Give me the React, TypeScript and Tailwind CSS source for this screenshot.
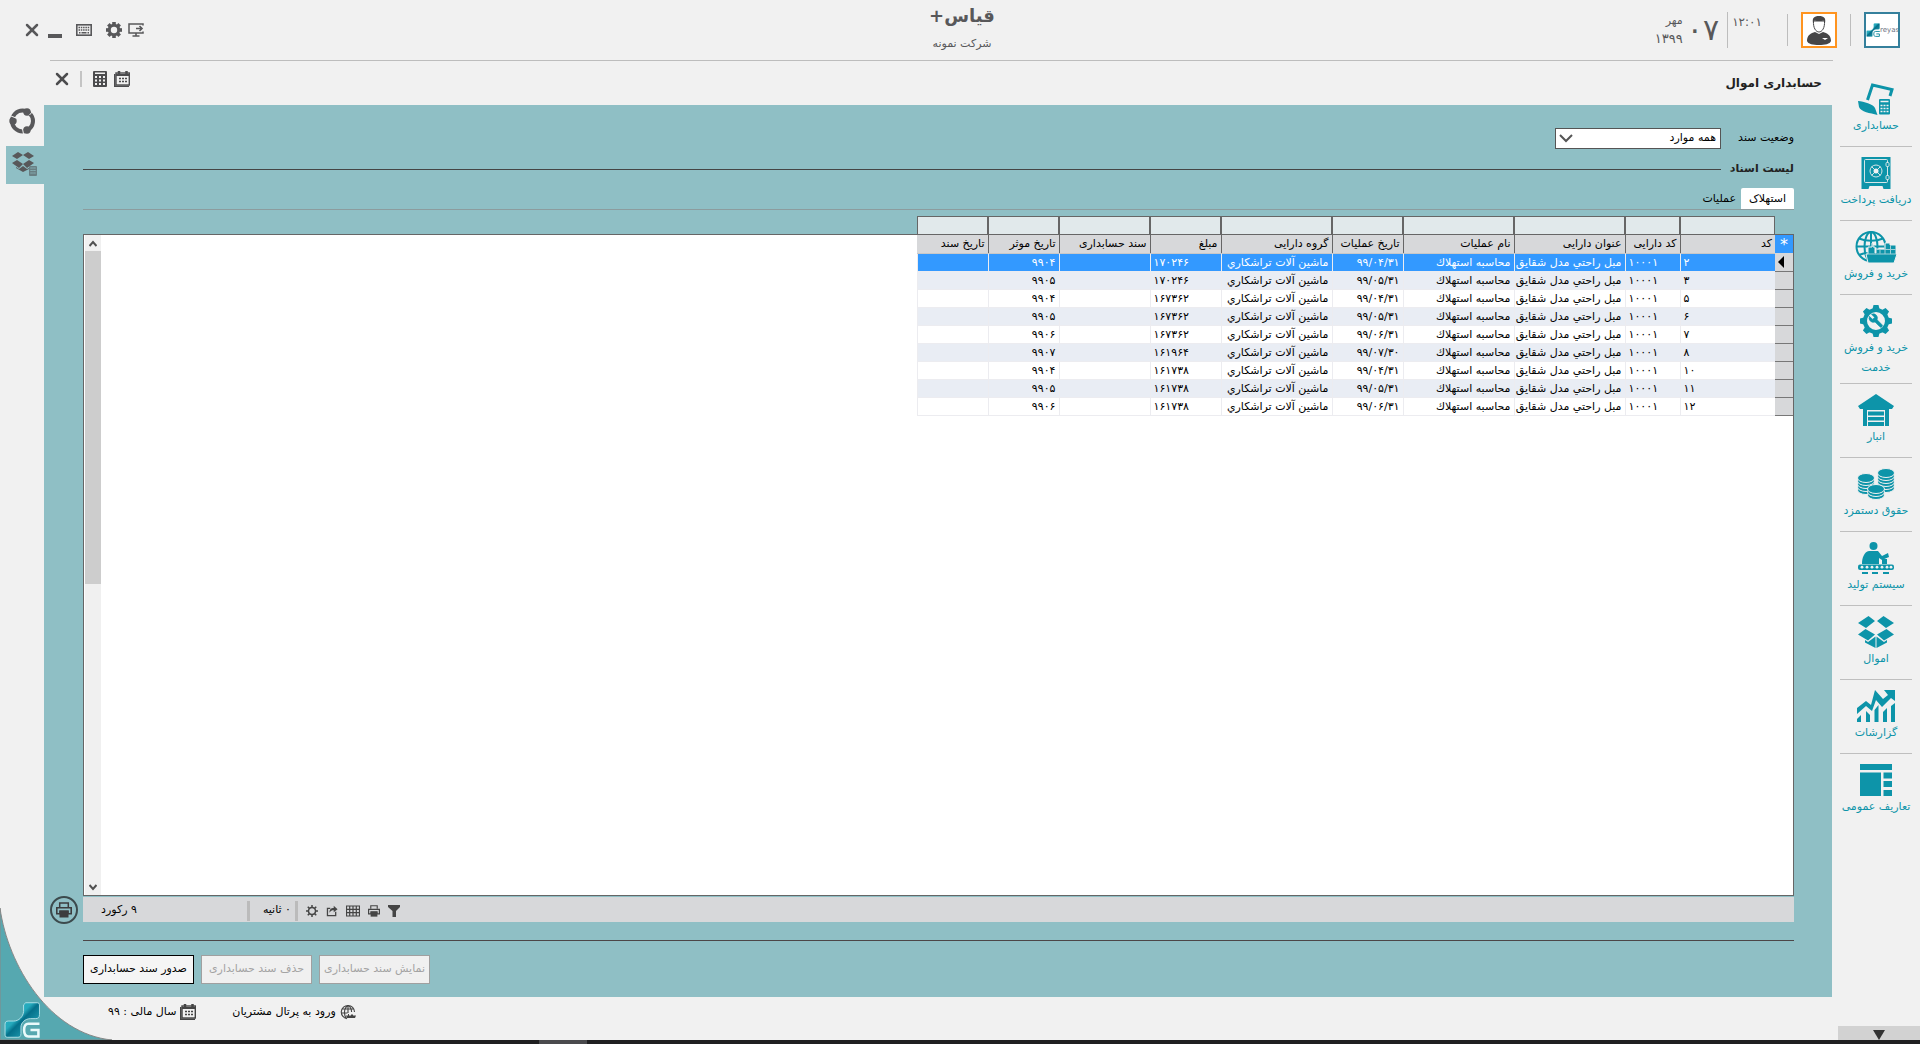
import type { ReactNode } from 'react';
import { X } from 'lucide-react';

// ----------------------------------------------------------------------------
// Icons
// ----------------------------------------------------------------------------

function Svg({ size = 32, box = 32, children }: { size?: number; box?: number; children: ReactNode }) {
  return (
    <svg width={size} height={size} viewBox={`0 0 ${box} ${box}`} fill="none" stroke="none" aria-hidden="true">
      {children}
    </svg>
  );
}

const GEAR_TEETH = [0, 45, 90, 135, 180, 225, 270, 315];

function AccountingIcon() {
  return (
    <svg width="36" height="32" viewBox="0 0 36 32" aria-hidden="true">
      <path d="M9.500 17 L14.500 2 L34 6.500 L32 13" fill="none" stroke="currentColor" strokeWidth="3" />
      <path d="M0 18 C6 18.500 15 21 17 25 L19.500 32 C12 30 3 29 1 24 Z" fill="currentColor" />
      <rect x="21" y="16" width="11" height="15.500" rx="1" fill="currentColor" />
      <path d="M22.500 18.500h8" stroke="#f1f1f1" strokeWidth="1.500" />
      <path d="M22.500 22.500h8M22.500 25.500h8M22.500 28.500h8" stroke="#f1f1f1" strokeWidth="1.500" strokeDasharray="2 1" />
    </svg>
  );
}

function SafeIcon() {
  return (
    <Svg>
      <path d="M1.500 0h29v32h-7l-1-3h-13l-1 3h-7z" fill="currentColor" />
      <rect x="4.500" y="2.500" width="23" height="23" rx="1" stroke="#d5e6e8" />
      <circle cx="16" cy="14" r="6" stroke="#d5e6e8" />
      <path d="M11.500 9.500l9 9M20.500 9.500l-9 9" stroke="#d5e6e8" />
      <circle cx="16" cy="14" r="2.500" fill="#f1f1f1" />
      <rect x="26" y="5.500" width="3" height="4" rx="1" fill="currentColor" stroke="#d5e6e8" />
      <rect x="26" y="18.500" width="3" height="4" rx="1" fill="currentColor" stroke="#d5e6e8" />
    </Svg>
  );
}

function TradeIcon() {
  return (
    <svg width="42" height="32" viewBox="0 0 42 32" aria-hidden="true">
      <g fill="none" stroke="currentColor" strokeWidth="2">
        <circle cx="16" cy="15.500" r="14.500" />
        <ellipse cx="16" cy="15.500" rx="6.500" ry="14.500" />
        <path d="M1.500 15.500h29M16 1v29M4 7.500c7 3 17 3 24 0M4 24c4-2 7-2 10-2" />
      </g>
      <path d="M11 23h2v-7h4v-4h1v4h2v6h1v-4h9v-6h5v2h6v9h1l-3 9H13z" fill="currentColor" stroke="#f1f1f1" strokeWidth="1" />
      <path d="M21 18.500h20M30 13v10M35.500 14v9M25 18.500v4M13 23h28" stroke="#9fd0d8" strokeWidth="1" />
    </svg>
  );
}

function ServiceIcon() {
  return (
    <Svg>
      {GEAR_TEETH.map((angle) => (
        <path key={angle} d="M12 6l1.500-6h5L20 6z" fill="currentColor" transform={`rotate(${angle} 16 16)`} />
      ))}
      <circle cx="16" cy="16" r="11" stroke="currentColor" strokeWidth="4" />
      <path
        d="M14.700 6.300a1 1 0 0 0 0 1.400l1.600 1.600a1 1 0 0 0 1.400 0l3.770-3.770a6 6 0 0 1-7.940 7.940l-6.910 6.910a2.120 2.120 0 0 1-3-3l6.910-6.910a6 6 0 0 1 7.940-7.940l-3.760 3.760z"
        fill="currentColor"
        stroke="currentColor"
        strokeWidth="1"
        transform="translate(24.500 7.500) scale(-0.700 0.700)"
      />
    </Svg>
  );
}

function WarehouseIcon() {
  return (
    <svg width="36" height="32" viewBox="0 0 36 32" aria-hidden="true">
      <path d="M18 0l18 12-2 3h-3v17h-4V16H9v16H5V15H2l-2-3z" fill="currentColor" />
      <path d="M10 17.500h16v4H10zM10 23h16v3.500H10zM10 28h16v4H10z" fill="currentColor" />
    </svg>
  );
}

function Coins({ x, y, count }: { x: number; y: number; count: number }) {
  return (
    <g>
      {Array.from({ length: count }, (_, i) => count - 1 - i).map((i) => (
        <ellipse
          key={i}
          cx={x}
          cy={y + i * 3}
          rx="8.500"
          ry="4.500"
          fill="#0d94a9"
          stroke="#f1f1f1"
          strokeWidth="1"
        />
      ))}
    </g>
  );
}

function PayrollIcon() {
  return (
    <svg width="38" height="32" viewBox="0 0 38 32" aria-hidden="true">
      <Coins x={29} y={5} count={6} />
      <Coins x={9} y={10} count={5} />
      <Coins x={19} y={21} count={3} />
    </svg>
  );
}

function ProductionIcon() {
  return (
    <svg width="36" height="32" viewBox="0 0 36 32" aria-hidden="true">
      <circle cx="15.500" cy="4" r="4" fill="currentColor" />
      <path d="M11 9h9l4 5 6-3 1 4-7 3-3-2v6H4c0-6 2-12 7-13z" fill="currentColor" />
      <path d="M24 17h5v5h-5z" fill="currentColor" />
      <rect y="22.500" width="36" height="5.500" rx="2" fill="currentColor" />
      {[4, 9, 14, 19, 24, 29, 33].map((cx) => (
        <circle key={cx} cx={cx} cy="25.200" r="1.400" fill="#f1f1f1" />
      ))}
      <path d="M4 31h6M14 31h6M25 31h6" stroke="currentColor" strokeWidth="2" />
    </svg>
  );
}

function AssetsIcon() {
  return (
    <svg width="36" height="32" viewBox="0 0 36 32" aria-hidden="true">
      <path
        d="M10.500 0L17 5 8 12 0 7zM25.500 0L36 7l-8 5-9-7zM7.500 13L17 18.500 10 24.500 0 18.500zM28.500 13l7.500 5.500-10 6-7-6z"
        fill="currentColor"
      />
      <path d="M7 24l3 2 7.500-5.500V32L7 26.500zM29 24l-3 2-7.500-5.500V32L29 26.500z" fill="currentColor" />
    </svg>
  );
}

function ReportsIcon() {
  return (
    <svg width="38" height="32" viewBox="0 0 38 32" aria-hidden="true">
      <path d="M0 18l9-7 5 4 4-15 8 9 5-4-4-5h11v11l-4-3-9 9-6-7-4 11-6-5-9 8z" fill="currentColor" />
      <path d="M0 29l4-4v7H0zM9 21l4 4v7H9zM17.500 20l4-5v17h-4zM26 22l4-4v14h-4zM34 16l4-3v19h-4z" fill="currentColor" />
    </svg>
  );
}

function DefinitionsIcon() {
  return (
    <Svg>
      <path d="M0 0h32v6H0zM0 8.500h21V32H0zM23.500 8.500H32v6h-8.500zM23.500 17H32v6h-8.500zM23.500 26H32v6h-8.500z" fill="currentColor" />
    </Svg>
  );
}

function GearIcon({ size = 16, thin = false }: { size?: number; thin?: boolean }) {
  return (
    <Svg size={size} box={16}>
      {GEAR_TEETH.map((angle) => (
        <rect
          key={angle}
          x={thin ? 7 : 6.2}
          y="0"
          width={thin ? 2 : 3.6}
          height="4"
          fill="currentColor"
          transform={`rotate(${angle} 8 8)`}
        />
      ))}
      <circle cx="8" cy="8" r="4.700" stroke="currentColor" strokeWidth={thin ? 2 : 3} />
    </Svg>
  );
}

function KeyboardIcon() {
  return (
    <Svg size={16} box={16}>
      <rect x="0.800" y="2.800" width="14.400" height="10.400" stroke="currentColor" strokeWidth="1.600" />
      <path d="M2.500 5.500h11M2.500 8h11" stroke="currentColor" strokeWidth="1.600" strokeDasharray="1.500 0.800" />
      <path d="M3 10.700h1.500M5.500 10.700h5M11.500 10.700h1.500" stroke="currentColor" strokeWidth="1.400" />
    </Svg>
  );
}

function MonitorIcon() {
  return (
    <Svg size={16} box={16}>
      <path d="M15 3.500V2H1v9h14V9.500" stroke="currentColor" strokeWidth="1.500" />
      <path d="M8 6.500h6M11.500 4l2.500 2.500L11.500 9M8 11v3M4.500 14h7" stroke="currentColor" strokeWidth="1.600" />
    </Svg>
  );
}

function CalculatorIcon({ size = 16 }: { size?: number }) {
  return (
    <Svg size={size} box={16}>
      <rect x="1" y="0" width="14" height="16" rx="1" fill="currentColor" />
      <path d="M3 1.500h10V3H3zM3 5h2v2H3zM7 5h2v2H7zM11 5h2v2h-2zM3 8.500h2v2H3zM7 8.500h2v2H7zM11 8.500h2v2h-2zM3 12h2v2H3zM7 12h2v2H7zM11 12h2v2h-2z" fill="#f1f1f1" />
    </Svg>
  );
}

function CalendarIcon() {
  return (
    <Svg size={16} box={16}>
      <path d="M0 3h1.500v11.500H15V16H0z" fill="currentColor" />
      <rect x="2" y="2" width="13.300" height="12" stroke="currentColor" strokeWidth="1.400" />
      <path d="M2 4h13" stroke="currentColor" strokeWidth="2" />
      <path d="M5 0v3.500M12.500 0v3.500" stroke="currentColor" strokeWidth="2.500" />
      <path d="M5 7.500h8M5 10.500h8" stroke="currentColor" strokeWidth="1.700" strokeDasharray="2 1" />
    </Svg>
  );
}

function RingIcon() {
  return (
    <Svg size={26} box={26}>
      <circle cx="13.500" cy="13" r="10.500" stroke="currentColor" strokeWidth="4" />
      <circle cx="4" cy="13" r="3.700" fill="currentColor" />
      <circle cx="18" cy="4" r="3.700" fill="currentColor" />
      <circle cx="18" cy="22" r="3.700" fill="currentColor" />
      <path d="M2 8l5 2M24 3l-3.500 4M14.500 26l-1-5" stroke="#f1f1f1" strokeWidth="1" />
    </Svg>
  );
}

function AssetAccountingIcon() {
  return (
    <Svg size={26} box={26}>
      <path d="M6 0l5 3-6 4-5-3zM16 0l6 4-5 3-6-4zM5 8l6 4-4 4-7-5zM17 8l5 3-7 5-4-4zM4 15l3 2 4-3 4 3 2-1v1l-6 3-7-4z" fill="currentColor" />
      <rect x="17" y="14" width="8" height="10" rx="1" fill="#697f83" />
      <path d="M18.500 16h5M18.500 18.500h5M18.500 21h5" stroke="#8fbfc5" strokeWidth="1" strokeDasharray="1.200 0.700" />
    </Svg>
  );
}

function PrinterIcon({ size = 12 }: { size?: number }) {
  return (
    <Svg size={size} box={16}>
      <path d="M3.700 5V1h8.600v4" stroke="currentColor" strokeWidth="1.500" />
      <path d="M0.800 5.800h14.400v6H12V9H4v2.800H0.800z" stroke="currentColor" strokeWidth="1.600" />
      <rect x="3.500" y="9" width="9" height="6.500" fill="currentColor" />
    </Svg>
  );
}

function ShareIcon() {
  return (
    <Svg size={12} box={14}>
      <path d="M5 4H1.700v8.300h9.600V8" stroke="currentColor" strokeWidth="1.500" />
      <path d="M4 9c0-4 2-5.500 5-5.500V1l4.500 4L9 8.500V6C7 6 5.500 6.500 4 9z" fill="currentColor" />
    </Svg>
  );
}

function GridIcon() {
  return (
    <Svg size={14} box={14}>
      <path d="M0.500 2h13v10H0.500zM0 5.300h14M0 8.700h14M3.700 2v10M7 2v10M10.300 2v10" stroke="currentColor" strokeWidth="1.200" />
    </Svg>
  );
}

function FunnelIcon() {
  return (
    <Svg size={12} box={12}>
      <path d="M0 0h12v2L8 6v6H4.500V6L0 2z" fill="currentColor" />
    </Svg>
  );
}

function GlobeIcon() {
  return (
    <Svg size={16} box={16}>
      <path d="M14.500 8A6.600 6.600 0 1 0 7 14.600M8 1.400C3.500 4 3.500 12 7 14.600M8 1.400c2 1.200 3.500 4 3.600 6.600M8 1.400V9M2 5h12M1.400 9h6" stroke="currentColor" strokeWidth="1.100" />
      <path d="M6 11.500h2V10h1v1.500h2v-1h2v1h3l-1 2.500H7z" fill="currentColor" />
    </Svg>
  );
}

function UserIcon() {
  return (
    <svg width="28" height="30" viewBox="0 0 28 30" fill="#454547" aria-hidden="true">
      <path d="M2 26c0-6 4-8 8-9l4 2 4-2c4 1 8 3 8 9-1 3-6 4-12 4S3 29 2 26z" />
      <path d="M8.500 6c-0.500 7 2.500 11 5.500 11s6-4 5.500-11z" fill="#fff" stroke="#454547" />
      <path d="M8 8C7 3 9 1 14 1s7 2 6 7l-1.500-2.500c-3 0.800-6 0.800-9 0z" />
      <path d="M17 23h6l-3 2z" fill="#fff" />
    </svg>
  );
}

// Two linked tiles with the G stroke hooked under them
function BrandMark({ size }: { size: number }) {
  return (
    <svg width={size} height={size} viewBox="0 0 34 34" className="shrink-0" aria-hidden="true">
      <defs>
        <linearGradient id="tile" x1="0" y1="0" x2="1" y2="1">
          <stop offset="0" stopColor="#29b4c6" />
          <stop offset="0.400" stopColor="#25a9bc" />
          <stop offset="0.500" stopColor="#04708a" />
          <stop offset="1" stopColor="#35bccd" />
        </linearGradient>
      </defs>
      <path d="M20.500 0.700h11a2 2 0 0 1 2 2v9c0 3-1 4-4 4H25c-5 0-9 4-9 8v6c0 3-1 3.600-3 3.600H3a2 2 0 0 1-2-2V21c0-2 1-3 3-3h5c5 0 9-4 9.500-9V2.700z" fill="url(#tile)" stroke="#bfe9ee" strokeWidth="0.800" />
      <path d="M33.500 20.500H23c-3 0-4 2-4 6s1 6 4 6h9.500v-6H25" fill="none" stroke={size > 20 ? '#e9fafb' : '#1b8fa3'} strokeWidth="2.400" />
    </svg>
  );
}

// ----------------------------------------------------------------------------
// Data
// ----------------------------------------------------------------------------

const MODULES = [
  { label: 'حسابداری', Icon: AccountingIcon },
  { label: 'دریافت پرداخت', Icon: SafeIcon },
  { label: 'خرید و فروش', Icon: TradeIcon },
  { label: 'خرید و فروش خدمت', Icon: ServiceIcon },
  { label: 'انبار', Icon: WarehouseIcon },
  { label: 'حقوق دستمزد', Icon: PayrollIcon },
  { label: 'سیستم تولید', Icon: ProductionIcon },
  { label: 'اموال', Icon: AssetsIcon },
  { label: 'گزارشات', Icon: ReportsIcon },
  { label: 'تعاریف عمومی', Icon: DefinitionsIcon },
];

const COLUMNS = [
  { title: 'کد', width: 'w-[95px]', align: 'text-left' },
  { title: 'کد دارایی', width: 'w-[55px]', align: 'text-left' },
  { title: 'عنوان دارایی', width: 'w-[111px]', align: 'text-right' },
  { title: 'نام عملیات', width: 'w-[111px]', align: 'text-right' },
  { title: 'تاریخ عملیات', width: 'w-[71px]', align: 'text-right' },
  { title: 'گروه دارایی', width: 'w-[111px]', align: 'text-right' },
  { title: 'مبلغ', width: 'w-[71px]', align: 'text-left' },
  { title: 'سند حسابداری', width: 'w-[91px]', align: 'text-right' },
  { title: 'تاریخ موثر', width: 'w-[71px]', align: 'text-right' },
  { title: 'تاریخ سند', width: 'w-[71px]', align: 'text-right' },
];

const ENTRIES = [
  ['۲', '۹۹/۰۴/۳۱', '۱۷۰۲۴۶', '۹۹۰۴'],
  ['۳', '۹۹/۰۵/۳۱', '۱۷۰۲۴۶', '۹۹۰۵'],
  ['۵', '۹۹/۰۴/۳۱', '۱۶۷۳۶۲', '۹۹۰۴'],
  ['۶', '۹۹/۰۵/۳۱', '۱۶۷۳۶۲', '۹۹۰۵'],
  ['۷', '۹۹/۰۶/۳۱', '۱۶۷۳۶۲', '۹۹۰۶'],
  ['۸', '۹۹/۰۷/۳۰', '۱۶۱۹۶۴', '۹۹۰۷'],
  ['۱۰', '۹۹/۰۴/۳۱', '۱۶۱۷۳۸', '۹۹۰۴'],
  ['۱۱', '۹۹/۰۵/۳۱', '۱۶۱۷۳۸', '۹۹۰۵'],
  ['۱۲', '۹۹/۰۶/۳۱', '۱۶۱۷۳۸', '۹۹۰۶'],
];

const ROWS = ENTRIES.map(([code, date, amount, period]) => [
  code,
  '۱۰۰۰۱',
  'مبل راحتي مدل شقايق',
  'محاسبه استهلاك',
  date,
  'ماشين آلات تراشكاري',
  amount,
  '',
  period,
  '',
]);

// ----------------------------------------------------------------------------
// Layout pieces
// ----------------------------------------------------------------------------

function IconButton({ label, children }: { label: string; children: ReactNode }) {
  return (
    <button type="button" aria-label={label} className="flex shrink-0 items-center justify-center">
      {children}
    </button>
  );
}

function CloseButton() {
  return (
    <IconButton label="بستن">
      <X className="-m-0.5 size-5" strokeWidth={3} />
    </IconButton>
  );
}

function Header() {
  return (
    <header className="grid h-15 grid-cols-[1fr_auto_1fr] pr-5 pl-6 text-[#58585a]">
      <div className="flex items-start gap-[13px] pt-3">
        <div dir="ltr" className="flex size-9 items-center overflow-hidden border-2 border-[#35809c] bg-white">
          <BrandMark size={14} />
          <span className="text-[7px] text-gray-500">reyas</span>
        </div>
        <div className="mt-0.5 h-8 w-px bg-[#bdbdbd]" />
        <div className="flex size-9 items-center justify-center border-2 border-[#ff9420] bg-white">
          <UserIcon />
        </div>
        <div className="mt-0.5 h-8 w-px bg-[#bdbdbd]" />
        <div className="flex">
          <time className="w-[46px] pt-0.5 pr-3 text-xs leading-4">۱۲:۰۱</time>
          <div className="h-9 w-px bg-[#bdbdbd]" />
          <div dir="ltr" className="mr-2 flex gap-1">
            <div className="text-right">
              <div className="text-[11px] leading-[18px]">مهر</div>
              <div className="text-[13px] leading-[18px]">۱۳۹۹</div>
            </div>
            <div className="text-3xl leading-9">۰۷</div>
          </div>
        </div>
      </div>
      <div className="pt-1 text-center">
        <h1 className="text-lg leading-6 font-bold">قیاس+</h1>
        <p className="text-[11px] leading-8">شرکت نمونه</p>
      </div>
      <div className="flex items-center justify-end gap-1.5">
        <IconButton label="نمایشگر">
          <MonitorIcon />
        </IconButton>
        <IconButton label="تنظیمات">
          <GearIcon />
        </IconButton>
        <div className="w-0.5" />
        <IconButton label="صفحه کلید">
          <KeyboardIcon />
        </IconButton>
        <div className="w-0.5" />
        <button type="button" aria-label="کوچک کردن" className="flex size-4 items-end">
          <span className="h-1 w-3.5 bg-current" />
        </button>
        <CloseButton />
      </div>
    </header>
  );
}

function ModuleNav() {
  return (
    <nav className="flex w-22 shrink-0 flex-col pt-3">
      <ul className="flex-1 px-2">
        {MODULES.map(({ label, Icon }) => (
          <li key={label} className="border-b border-[#bfbfbf] last:border-b-0">
            <a href="#" className="-mx-2 flex flex-col items-center px-2 pt-2.5 pb-[5px] text-[#0d94a9]">
              <Icon />
              <span className="mt-px min-h-[25px] w-22 px-1 text-center text-[11px] leading-5">{label}</span>
            </a>
          </li>
        ))}
      </ul>
      <button type="button" aria-label="موارد بیشتر" className="ml-1.5 flex h-3.5 justify-center bg-[#d2d2d2] pt-1 text-[#333]">
        <svg width="12" height="10" viewBox="0 0 12 10" aria-hidden="true">
          <path d="M0 0h12L6 10z" fill="currentColor" />
        </svg>
      </button>
    </nav>
  );
}

function ScrollBar() {
  return (
    <div className="flex w-[17px] shrink-0 flex-col items-center border-l border-white bg-[#f0f0f0] text-[#505050]">
      <svg width="8" height="16" viewBox="0 0 8 16" fill="none" stroke="currentColor" strokeWidth="2" aria-hidden="true">
        <path d="M0.500 11L4 7l3.500 4" />
      </svg>
      <div className="w-full flex-1">
        <div className="h-[53%] bg-[#cdcdcd]" />
      </div>
      <svg width="8" height="16" viewBox="0 0 8 16" fill="none" stroke="currentColor" strokeWidth="2" aria-hidden="true">
        <path d="M0.500 6L4 10l3.500-4" />
      </svg>
    </div>
  );
}

function EntriesTable() {
  return (
    <table className="w-[876px] table-fixed border-collapse text-[11px] whitespace-nowrap text-black">
      <thead>
        <tr className="h-[18px] bg-[#d7d8da]">
          <th className="w-[18px] bg-[#3399ff] p-0 text-center text-base leading-[17px] font-normal text-white">*</th>
          {COLUMNS.map((col) => (
            <th
              key={col.title}
              className={`${col.width} overflow-hidden border-b border-l border-b-[#c8c8c8] border-l-[#666] px-[3px] py-0 text-right leading-[17px] font-normal last:border-l-0`}
            >
              {col.title}
            </th>
          ))}
        </tr>
      </thead>
      <tbody>
        {ROWS.map((row, r) => (
          <tr
            key={row[0]}
            className={
              r === 0 ? 'h-[18px] bg-[#3399ff] text-white' : r % 2 ? 'h-[18px] bg-[#e9edf4]' : 'h-[18px] bg-white'
            }
          >
            <th className="border-b border-[#777] bg-[#d7d8da] p-0 text-black">
              {r === 0 && (
                <svg width="7" height="12" viewBox="0 0 7 12" className="mr-auto ml-0.5" aria-hidden="true">
                  <path d="M7 0v12L1 6z" fill="currentColor" />
                </svg>
              )}
            </th>
            {row.map((cell, c) => (
              <td
                key={COLUMNS[c].title}
                className={`${COLUMNS[c].align} overflow-hidden border-b border-l border-[#ececf0] px-[3px] py-0 leading-[17px]`}
              >
                {cell}
              </td>
            ))}
          </tr>
        ))}
      </tbody>
    </table>
  );
}

function StatusBar() {
  return (
    <div className="mt-px flex h-[25px]">
      <div className="flex flex-1 items-center justify-end bg-[#d7d8da] pt-0.5 text-[11px] text-black">
        <div className="flex items-center gap-2 text-[#454545]">
          <IconButton label="فیلتر"><FunnelIcon /></IconButton>
          <IconButton label="چاپ"><PrinterIcon /></IconButton>
          <IconButton label="ستون ها"><GridIcon /></IconButton>
          <IconButton label="ارسال"><ShareIcon /></IconButton>
          <IconButton label="تنظیمات جدول"><GearIcon size={12} thin /></IconButton>
        </div>
        <div className="mr-2 h-5 w-[3px] bg-[#bbb]" />
        <div className="w-[45px] pr-1">۰ ثانیه</div>
        <div className="h-5 w-[3px] bg-[#bbb]" />
        <div className="w-[164px] pl-[18px] text-left">۹ رکورد</div>
      </div>
      <div className="flex w-[39px] items-center justify-center">
        <button type="button" aria-label="چاپ فهرست" className="-my-1 flex size-7 items-center justify-center rounded-full border-2 border-[#3c4a4d] text-[#3c3c3e]">
          <PrinterIcon size={16} />
        </button>
      </div>
    </div>
  );
}

function DocumentsPanel() {
  return (
    <section className="flex min-h-0 flex-1 flex-col bg-[#8fbfc5] pr-[38px] text-[#222]">
      <div className="flex min-h-0 flex-1 flex-col pt-[23px] pl-[39px]">
        <div className="flex items-center text-[11px]">
          <label htmlFor="status" className="w-[73px] text-black">وضعیت سند</label>
          <div className="relative">
            <select id="status" className="block h-[21px] w-[166px] appearance-none border border-[#555] bg-white pr-1 text-black">
              <option>همه موارد</option>
            </select>
            <svg width="14" height="9" viewBox="0 0 14 9" fill="none" stroke="#555" strokeWidth="2" className="pointer-events-none absolute top-1.5 left-1" aria-hidden="true">
              <path d="M1 1l6 6 6-6" />
            </svg>
          </div>
        </div>
        <div className="mt-2.5 flex items-center">
          <h3 className="w-[73px] text-[11px] leading-5 font-bold whitespace-nowrap">لیست اسناد</h3>
          <div className="h-px flex-1 bg-[#454545]" />
        </div>
        <div role="tablist" className="mt-[9px] flex border-b border-[#8c9c9e] text-[11px] leading-[21px] text-black">
          <button type="button" role="tab" aria-selected="true" className="w-[53px] rounded-t-xs bg-white text-center">استهلاک</button>
          <button type="button" role="tab" aria-selected="false" className="px-[5px]">عملیات</button>
        </div>
        <div className="mt-1.5 flex pr-[19px]">
          {COLUMNS.map((col) => (
            <input
              key={col.title}
              type="text"
              aria-label={`فیلتر ${col.title}`}
              className={`${col.width} block h-[18px] shrink-0 border border-b-0 border-[#666] bg-[#e1e9eb]`}
            />
          ))}
        </div>
        <div className="flex min-h-0 flex-1 border border-[#666] bg-white">
          <div className="min-w-0 flex-1">
            <EntriesTable />
          </div>
          <ScrollBar />
        </div>
      </div>
      <StatusBar />
      <div className="mt-[18px] ml-[39px] h-px bg-[#4c4648]" />
      <div className="mt-3.5 mb-[13px] flex justify-end gap-[7px] pl-[39px] text-[11px]">
        <button type="button" disabled className="h-[29px] w-[111px] border border-[#a0a0a0] bg-[#f0f0f0] whitespace-nowrap text-[#a3a3a3]">نمایش سند حسابداری</button>
        <button type="button" disabled className="h-[29px] w-[111px] border border-[#a0a0a0] bg-[#f0f0f0] whitespace-nowrap text-[#a3a3a3]">حذف سند حسابداری</button>
        <button type="button" className="h-[29px] w-[111px] border border-black bg-[#f5f5f5] whitespace-nowrap text-black">صدور سند حسابداری</button>
      </div>
    </section>
  );
}

export default function App() {
  return (
    <div dir="rtl" className="relative isolate flex h-screen flex-col overflow-hidden bg-[#f1f1f1] font-['DejaVu_Sans',sans-serif]">
      <svg width="112" height="136" viewBox="0 0 112 136" className="absolute bottom-1 left-0 -z-10" aria-hidden="true">
        <path d="M0 4C8 62 50 130 112 136H0z" fill="#56a8b0" stroke="#888" />
      </svg>
      <Header />
      <div className="mr-[87px] ml-[50px] h-px shrink-0 bg-[#bdbdbd]" />

      <div className="flex min-h-0 flex-1">
        <ModuleNav />

        <main className="flex min-w-0 flex-1 flex-col">
          <div className="flex h-11 shrink-0 items-center justify-between px-2.5 text-[#4c4c4e]">
            <h2 className="text-xs font-bold text-[#222]">حسابداری اموال</h2>
            <div className="flex items-center gap-1.5 pb-2">
              <IconButton label="تقویم"><CalendarIcon /></IconButton>
              <IconButton label="ماشین حساب"><CalculatorIcon /></IconButton>
              <div className="mx-1 h-4 w-0.5 bg-[#c4c4c4]" />
              <CloseButton />
            </div>
          </div>
          <DocumentsPanel />
          <footer className="flex h-[43px] shrink-0 items-start justify-end gap-9 pt-1.5 pl-16 text-[11px] leading-[18px] text-black">
            <a href="#" className="flex items-center gap-1">
              <span className="text-[#444]"><GlobeIcon /></span>
              ورود به پرتال مشتریان
            </a>
            <div className="flex items-center gap-1">
              <span className="text-[#444]"><CalendarIcon /></span>
              سال مالی : ۹۹
            </div>
          </footer>
        </main>

        <aside className="flex w-11 shrink-0 flex-col text-[#58585a]">
          <button type="button" aria-label="گردش" className="mt-[47px] flex justify-center">
            <RingIcon />
          </button>
          <button type="button" aria-label="حسابداری اموال" className="mt-3 ml-1.5 flex h-[38px] items-center justify-center bg-[#8fbfc5]">
            <AssetAccountingIcon />
          </button>
          <div className="mt-auto mb-0.5 flex pr-1">
            <BrandMark size={36} />
          </div>
        </aside>
      </div>

      <div className="flex h-1 shrink-0 justify-end bg-[#1f1f21]">
        <div className="ml-[539px] w-12 bg-[#4a4a4d]" />
      </div>
    </div>
  );
}
